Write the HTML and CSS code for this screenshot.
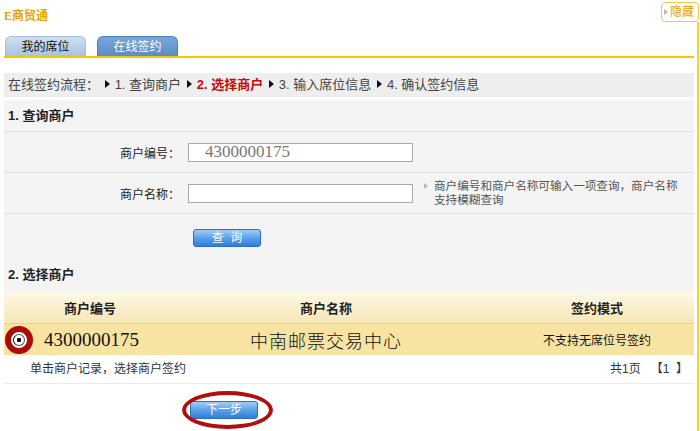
FILE: index.html
```
<!DOCTYPE html>
<html lang="zh-CN">
<head>
  <meta charset="UTF-8">
  <title>E商贸通</title>
  <link rel="stylesheet" href="styles.css">
</head>
<body>
<div class="top">
  <span class="brand">E商贸通</span>
  <span class="hide-btn"><i class="tri"></i>隐藏</span>
</div>

<div class="frame">
  <div class="tabs">
    <span class="tab">我的席位</span>
    <span class="tab active">在线签约</span>
  </div>

  <div class="flow">
    在线签约流程：
    <i class="arrow"></i><span>1. 查询商户</span>
    <i class="arrow"></i><span class="current">2. 选择商户</span>
    <i class="arrow"></i><span>3. 输入席位信息</span>
    <i class="arrow"></i><span>4. 确认签约信息</span>
  </div>

  <div class="panel">
    <h3 class="sec">1. 查询商户</h3>
    <div class="row">
      <label>商户编号：</label>
      <input type="text" class="code" value="4300000175">
    </div>
    <div class="row">
      <label>商户名称：</label>
      <input type="text">
      <p class="hint"><i class="tri"></i>商户编号和商户名称可输入一项查询，商户名称<br>支持模糊查询</p>
    </div>
    <div class="row btn-row">
      <button class="blue-btn">查&nbsp;&nbsp;询</button>
    </div>
    <h3 class="sec sec2">2. 选择商户</h3>
  </div>

  <div class="table">
    <div class="thead">
      <span>商户编号</span>
      <span>商户名称</span>
      <span>签约模式</span>
    </div>
    <div class="trow">
      <span class="c1"><i class="ring"><i class="radio"></i></i>4300000175</span>
      <span class="c2">中南邮票交易中心</span>
      <span class="c3">不支持无席位号签约</span>
    </div>
    <div class="tfoot">
      <span>单击商户记录，选择商户签约</span>
      <span>共1页 &nbsp; 【1&nbsp;&nbsp;】</span>
    </div>
  </div>

  <div class="next">
    <button class="blue-btn">下一步</button>
    <i class="mark"></i>
  </div>
</div>
</body>
</html>
```

FILE: styles.css
```
body {
  margin: 0;
  width: 700px;
  font-family: "Liberation Sans", "Noto Sans CJK SC", sans-serif;
  font-size: 12px;
  color: #333;
}
.top {
  display: flex;
  justify-content: space-between;
  height: 22px;
}
.brand {
  padding: 6px 0 0 4px;
  font-family: "Liberation Serif", "Noto Sans CJK SC", serif;
  font-weight: bold;
  font-size: 12px;
  color: #eaa300;
}
.hide-btn {
  margin: 2px 1px 0 0;
  width: 34px;
  height: 18px;
  border: 1px solid #f2c84a;
  border-radius: 4px;
  color: #e8a000;
  font-size: 12px;
  line-height: 18px;
  display: flex;
  align-items: center;
  gap: 2px;
  padding-left: 2px;
  box-sizing: content-box;
}
.tri {
  display: inline-block;
  width: 0;
  height: 0;
  border-left: 4px solid #b8b8b8;
  border-top: 3px solid transparent;
  border-bottom: 3px solid transparent;
}
.frame {
  width: 690px;
  padding: 14px 3px 0 4px;
  border-right: 2px solid #f5cf3e;
  min-height: calc(100vh - 36px);
}
.tabs {
  display: flex;
  gap: 11px;
  padding-left: 1px;
  border-bottom: 2px solid #f5c800;
}
.tab {
  width: 81px;
  height: 20px;
  line-height: 21px;
  text-align: center;
  border-radius: 6px 6px 0 0;
  background: linear-gradient(#cfdff0, #a8c3e1);
  color: #111;
  box-sizing: border-box;
  border: 1px solid #a6c0dc;
  border-bottom: 0;
}
.tab.active {
  background: linear-gradient(#7aa7d8, #5b8cc6);
  border-color: #4f7fb8;
  color: #fff;
}
.flow {
  margin-top: 15px;
  height: 24px;
  line-height: 24px;
  background: #eeeeee;
  padding-left: 4px;
  font-size: 13px;
  color: #444;
}
.arrow {
  display: inline-block;
  width: 0;
  height: 0;
  margin: 0 5px 1px 2px;
  border-left: 5px solid #111;
  border-top: 4px solid transparent;
  border-bottom: 4px solid transparent;
}
.flow .current {
  color: #c8080a;
  font-weight: bold;
}
.panel {
  margin-top: 3px;
  background: #f4f4f4;
}
.sec {
  margin: 0;
  height: 31px;
  line-height: 31px;
  padding-left: 4px;
  font-size: 13px;
  color: #222;
  border-bottom: 1px solid #e2e2e2;
}
.sec2 {
  height: 36px;
  line-height: 24px;
  box-sizing: border-box;
  display: flex;
  align-items: flex-end;
  padding-bottom: 5px;
  border-bottom: 0;
}
.row {
  display: flex;
  align-items: center;
  height: 40px;
  border-bottom: 1px solid #e2e2e2;
}
.row label {
  width: 176px;
  text-align: right;
  color: #222;
  margin-right: 8px;
}
.row input {
  width: 225px;
  height: 19px;
  box-sizing: border-box;
  border: 1px solid #a9a9a9;
  background: #fff;
  margin: 0;
}
.row .code {
  font-family: "Liberation Serif", serif;
  font-size: 17px;
  color: #777;
  padding-left: 16px;
}
.hint {
  margin: 0 0 0 11px;
  font-size: 11.6px;
  line-height: 14px;
  color: #555;
  position: relative;
  padding-left: 10px;
}
.hint .tri {
  position: absolute;
  left: 0;
  top: 4px;
}
.btn-row {
  height: 42px;
  border-bottom: 0;
  padding-left: 189px;
  align-items: flex-start;
  padding-top: 15px;
  box-sizing: border-box;
}
.blue-btn {
  width: 68px;
  height: 18px;
  padding: 0;
  border: 1px solid #2f6fc0;
  border-radius: 3px;
  background: linear-gradient(#a2cdf6, #5aa0ea 50%, #2f7fd8);
  color: #fff;
  font-family: inherit;
  font-size: 12px;
  line-height: 16px;
}
.thead, .trow {
  display: grid;
  grid-template-columns: 172px 300px 1fr;
  height: 31px;
  align-items: center;
}
.thead {
  background: linear-gradient(#fdf8e8, #f6e7b6);
  border-bottom: 1px solid #e6d49a;
  font-weight: bold;
  font-size: 13px;
  color: #222;
  text-align: center;
}
.thead span:last-child, .trow .c3 {
  padding-left: 24px;
  text-align: center;
}
.trow {
  background: #f8e4a2;
  color: #111;
}
.c1 {
  display: flex;
  align-items: center;
  font-family: "Liberation Serif", serif;
  font-size: 19px;
}
.ring {
  flex-shrink: 0;
  width: 16px;
  height: 16px;
  border: 6px solid #a80c0c;
  border-radius: 50%;
  margin: 0 11px 0 1px;
  display: flex;
  align-items: center;
  justify-content: center;
  background: #fff;
}
.radio {
  width: 10px;
  height: 10px;
  border-radius: 50%;
  border: 1px solid #555;
  border-left-color: #111;
  background: radial-gradient(#111 0 2px, #fff 2.5px);
}
.c2 {
  text-align: center;
  font-family: "Noto Sans CJK SC", serif;
  font-size: 18px;
  letter-spacing: 1px;
  font-weight: 300;
}
.c3 {
  font-size: 12px;
}
.tfoot {
  display: flex;
  justify-content: space-between;
  height: 28px;
  line-height: 28px;
  padding: 0 6px 0 26px;
  border-bottom: 1px solid #f0ece0;
  color: #333;
}
.next {
  position: relative;
  padding: 17px 0 0 186px;
  height: 20px;
}
.mark {
  position: absolute;
  left: 178px;
  top: 7px;
  width: 83px;
  height: 30px;
  border: 4px solid #b30d0d;
  border-radius: 50%;
}
```
